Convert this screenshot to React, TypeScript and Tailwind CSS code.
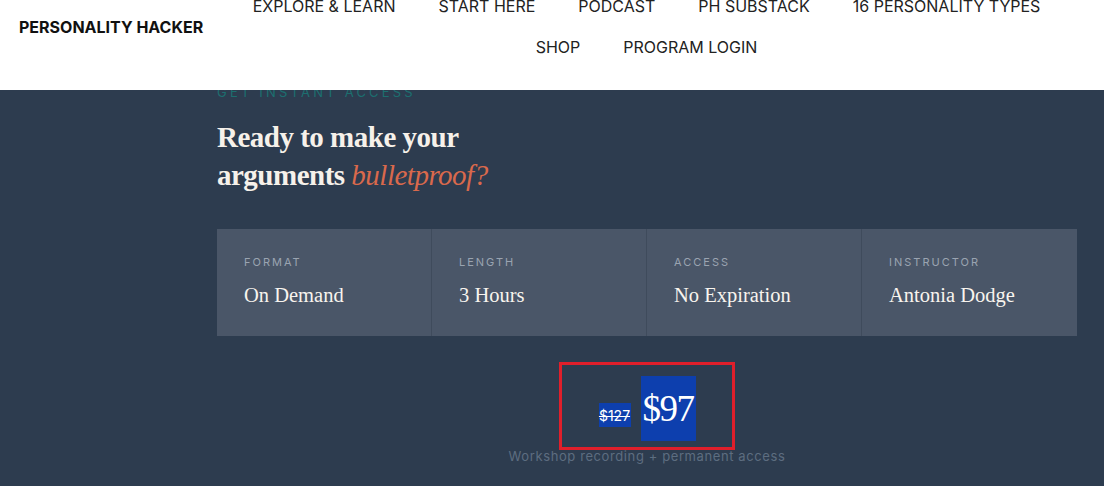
export default function App() {
  const navItems = ["EXPLORE & LEARN", "START HERE", "PODCAST", "PH SUBSTACK", "16 PERSONALITY TYPES", "SHOP", "PROGRAM LOGIN"]
  const details = [
    { label: "FORMAT", value: "On Demand" },
    { label: "LENGTH", value: "3 Hours" },
    { label: "ACCESS", value: "No Expiration" },
    { label: "INSTRUCTOR", value: "Antonia Dodge" },
  ]

  return (
    <div className="w-[1104px] h-[486px] overflow-hidden bg-[#2d3c4f] font-['Inter',_'Liberation_Sans',_sans-serif]">
      {/* Header */}
      <header className="relative z-10 h-[90px] bg-white flex items-start overflow-hidden">
        <div className="w-[226px] pl-[19px] mt-[17px] text-[16px] leading-[20px] font-bold text-[#111]">
          PERSONALITY HACKER
        </div>
        <nav className="w-[841px] -mt-[14px] flex flex-wrap justify-center gap-x-[43px] text-[16px] leading-[41px] text-[#222]">
          {navItems.map((item) => (
            <a key={item} href="#" className="whitespace-nowrap">
              {item}
            </a>
          ))}
        </nav>
      </header>

      {/* Offer section */}
      <section className="ml-[217px] w-[860px]">
        <div className="h-[9px] overflow-hidden flex items-end">
          <p className="text-[13px] leading-[13px] tracking-[3.2px] text-[#1c6f6f] whitespace-nowrap">GET INSTANT ACCESS</p>
        </div>

        <h2 className="mt-[19px] font-['Liberation_Serif',_serif] font-bold text-[29px] leading-[38px] text-[#f6f1ea] tracking-[-0.5px]">
          Ready to make your
          <br />
          arguments <em className="font-normal text-[#d9694c]">bulletproof?</em>
        </h2>

        <div className="mt-[35px] grid grid-cols-4 h-[107px] bg-[#4a5668] divide-x divide-[#3f4b5c]">
          {details.map((d) => (
            <div key={d.label} className="pl-[27px] pt-[26px]">
              <p className="text-[11px] leading-[14px] tracking-[2px] text-[#9aa4b1]">{d.label}</p>
              <p className="mt-[12px] font-['Liberation_Serif',_serif] text-[20.5px] leading-[28px] text-[#f8f4ee]">{d.value}</p>
            </div>
          ))}
        </div>

        <div className="mt-[26px] flex flex-col items-center">
          <div className="w-[176px] h-[88px] border-[3px] border-[#e01f2b] flex items-end justify-center gap-[10px] pb-[6px]">
            <span className="mb-[14px] h-[24px] w-[32px] flex items-center justify-center bg-[#0d3fae] text-[14px] text-white line-through">
              $127
            </span>
            <span className="h-[65px] w-[55px] flex items-center justify-center bg-[#0d3fae] font-['Liberation_Serif',_serif] text-[37px] tracking-[-1.5px] text-white">
              $97
            </span>
          </div>
          <p className="-mt-[2px] text-[13px] leading-[16px] tracking-[0.6px] text-[#5d6d80]">
            Workshop recording + permanent access
          </p>
        </div>
      </section>
    </div>
  )
}
